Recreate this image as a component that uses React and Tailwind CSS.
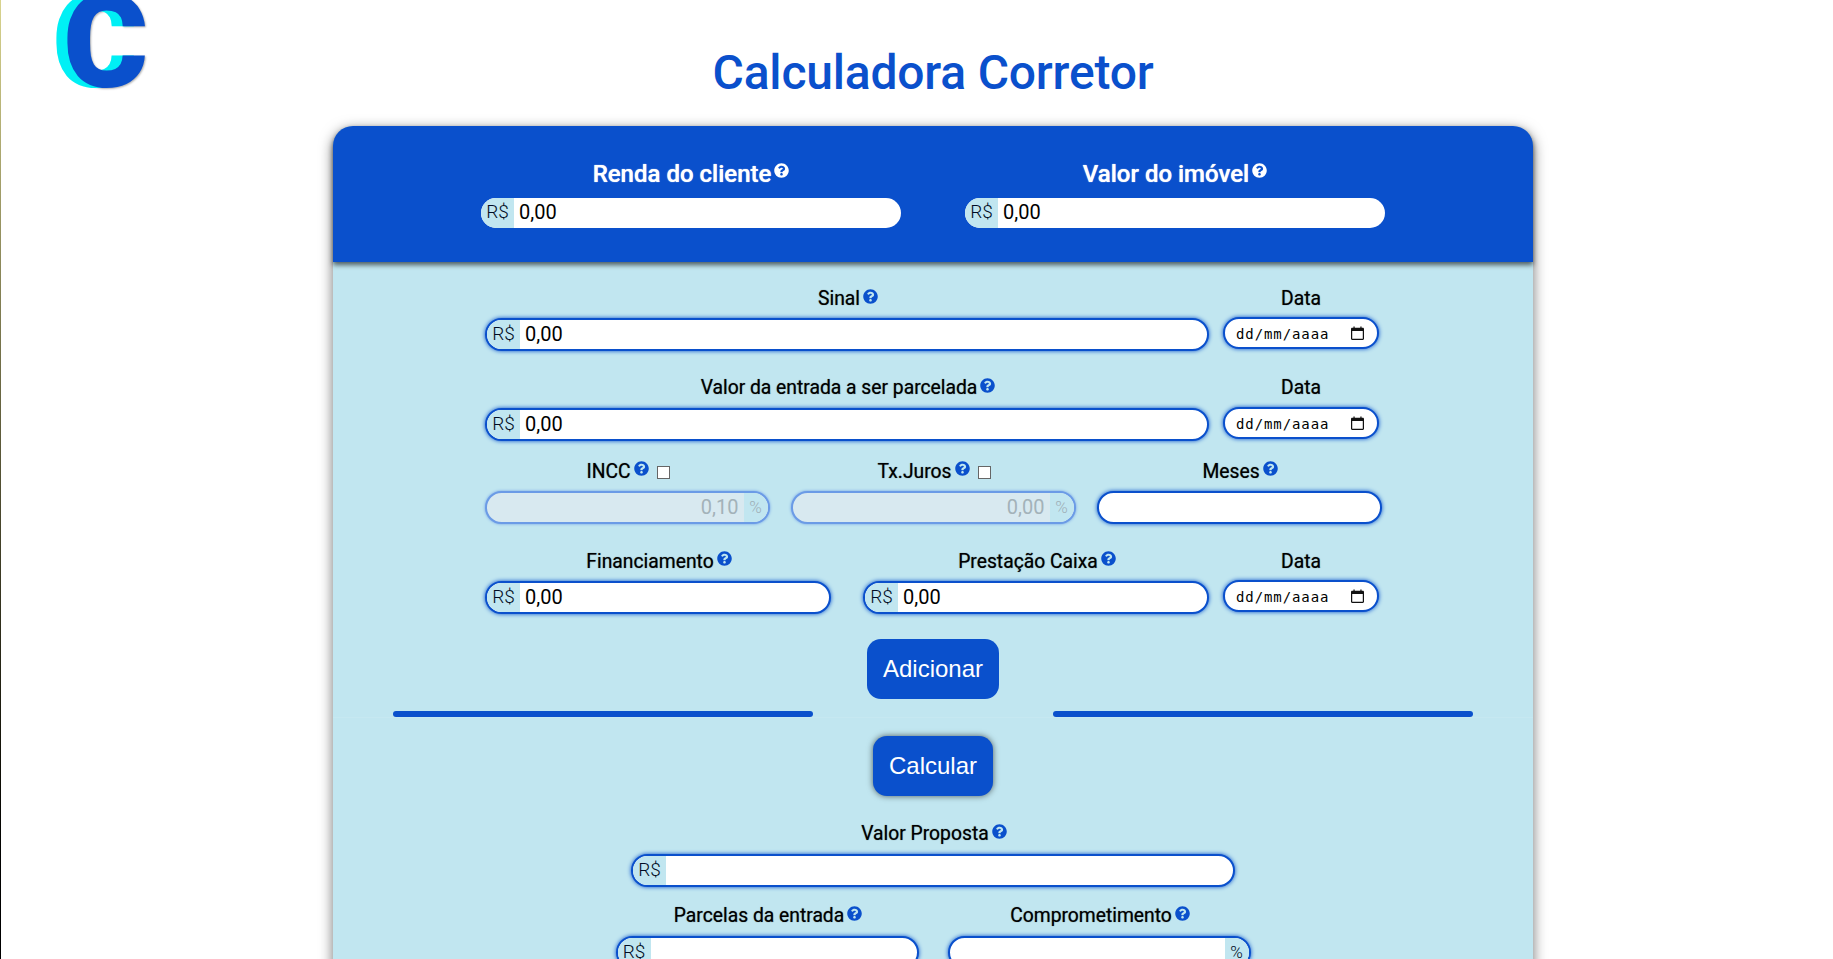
import React from 'react';
import { FaQuestionCircle } from 'react-icons/fa';

function Help({ light, high }) {
  return (
    <FaQuestionCircle className={`w-[15px] h-[15px] ml-[3px] ${high ? '-translate-y-[4px]' : '-translate-y-[3px]'} ${light ? 'text-white' : 'text-[#0a50cc]'}`} />
  );
}

function Label({ text, help, check, high }) {
  return (
    <div className={`flex items-center justify-center h-[22px] text-[19.3px] leading-[22px] text-black [text-shadow:0_0_1px_rgba(0,0,0,0.6)] ${help ? 'pl-[2px]' : ''}`}>
      <span>{text}</span>
      {help && <Help high={high} />}
      {check && <input type="checkbox" className="ml-[8px] w-[13px] h-[13px] appearance-none bg-white border border-[#666]" />}
    </div>
  );
}

function MoneyInput({ value, plain, suffix, disabled, className }) {
  const border = plain ? 'h-[30px]' : disabled
    ? 'h-[33px] border-2 border-[#6b9be6] shadow-[0_0_3px_#6b9be6]'
    : 'h-[33px] border-2 border-[#0a50cc] shadow-[0_0_4px_#0a50cc]';
  return (
    <div className={`flex items-stretch rounded-full overflow-hidden ${disabled ? 'bg-[#d8e9f0]' : 'bg-white'} ${border} ${className || ''}`}>
      {!suffix && !disabled && (
        <span className={`w-[33px] shrink-0 flex items-center justify-center bg-[#c1e6f0] text-[19px] font-light text-[#000c24] ${plain ? 'pb-[1px]' : ''}`}>R$</span>
      )}
      <input
        readOnly
        value={value || ''}
        className={`min-w-0 flex-1 bg-transparent outline-none pb-[2px] text-[20px] ${disabled ? 'pl-[4px] pr-[5px] text-right text-[#a3b2b9]' : 'px-[5px] text-black'}`}
      />
      {suffix && (
        <span className={`w-[24px] shrink-0 flex items-center justify-center bg-[#c1e6f0] text-[17px] font-light ${disabled ? 'text-[#9fb0b8]' : 'text-[#000c24]'}`}>%</span>
      )}
    </div>
  );
}

function DateInput() {
  return (
    <div className="flex items-center justify-between w-[156px] h-[32px] rounded-full bg-white border-2 border-[#0a50cc] shadow-[0_0_4px_#0a50cc] pl-[11px] pr-[13px]">
      <span className="mt-[2px] text-[14px] tracking-[0.9px] text-black font-['DejaVu_Sans_Mono',monospace]">dd/mm/aaaa</span>
      <svg width="13" height="15" viewBox="0 0 16 18" fill="#111">
        <path d="M14.5 2H13V.5h-1.5V2h-7V.5H3V2H1.5C.67 2 0 2.67 0 3.5v12c0 .83.67 1.5 1.5 1.5h13c.83 0 1.5-.67 1.5-1.5v-12C16 2.67 15.33 2 14.5 2zm0 13.5h-13V6h13v9.5z" />
      </svg>
    </div>
  );
}

function DateField({ gap }) {
  return (
    <div className="w-[156px] shrink-0">
      <Label text="Data" />
      <div className={gap}>
        <DateInput />
      </div>
    </div>
  );
}

function App() {
  return (
    <div className="flex h-screen overflow-hidden bg-white font-['Roboto',sans-serif]">
      <div className="w-px shrink-0 bg-gradient-to-b from-[#d9d48e] to-black" />
      <div className="flex-1 min-w-0 pl-[32px] flex flex-col items-center">
        <div className="w-full h-[126px] shrink-0 grid grid-cols-[1fr_auto_1fr] overflow-hidden">
          <div className="ml-[30px] -mt-[22px] text-[130px] leading-[130px] font-black text-[#0a50cc] [text-shadow:-11px_0_0_#00f0f5,1px_1px_2px_rgba(0,0,0,0.3)]">C</div>
          <h1 className="pt-[43px] text-[48px] leading-[60px] font-medium tracking-[-0.2px] text-[#0a50cc]">Calculadora Corretor</h1>
          <div />
        </div>

        <div className="w-[1200px] shrink-0 rounded-t-[20px] bg-[#c1e6f0] shadow-[0_4px_14px_rgba(0,0,0,0.55)]">
          <div className="h-[136px] rounded-t-[20px] bg-[#0a50cc] shadow-[0_3px_5px_rgba(0,0,0,0.6)] pt-[34px] flex justify-center gap-[64px]">
            {['Renda do cliente', 'Valor do imóvel'].map((text) => (
              <div key={text} className="w-[420px]">
                <div className="flex items-center justify-center h-[28px] mb-[10px] text-[24px] font-medium text-white [text-shadow:0_0_1px_#ffffff]">
                  <span>{text}</span>
                  <Help light high />
                </div>
                <MoneyInput plain value="0,00" />
              </div>
            ))}
          </div>

          <div className="h-[455px] pt-[26px] flex flex-col items-center">
            <div className="w-[896px] flex gap-[14px]">
              <div className="w-[724px]">
                <Label text="Sinal" help />
                <MoneyInput value="0,00" className="mt-[8px]" />
              </div>
              <DateField gap="mt-[7px]" />
            </div>

            <div className="w-[896px] flex gap-[14px] mt-[26px]">
              <div className="w-[724px]">
                <Label text="Valor da entrada a ser parcelada" help />
                <MoneyInput value="0,00" className="mt-[9px]" />
              </div>
              <DateField gap="mt-[8px]" />
            </div>

            <div className="w-[897px] grid grid-cols-3 gap-[21px] mt-[20px]">
              <div>
                <Label text="INCC" help check high />
                <MoneyInput disabled suffix value="0,10" className="mt-[8px]" />
              </div>
              <div>
                <Label text="Tx.Juros" help check high />
                <MoneyInput disabled suffix value="0,00" className="mt-[8px]" />
              </div>
              <div>
                <Label text="Meses" help high />
                <div className="mt-[8px] h-[33px] rounded-full bg-white border-2 border-[#0a50cc] shadow-[0_0_4px_#0a50cc]" />
              </div>
            </div>

            <div className="w-[896px] flex gap-[14px] mt-[27px]">
              <div className="w-[724px] flex gap-[32px]">
                <div className="flex-1">
                  <Label text="Financiamento" help high />
                  <MoneyInput value="0,00" className="mt-[8px]" />
                </div>
                <div className="flex-1">
                  <Label text="Prestação Caixa" help high />
                  <MoneyInput value="0,00" className="mt-[8px]" />
                </div>
              </div>
              <DateField gap="mt-[7px]" />
            </div>

            <button className="mt-[25px] w-[132px] h-[60px] rounded-[14px] bg-[#0a50cc] text-white text-[24px] font-['Liberation_Sans',Arial,sans-serif]">Adicionar</button>

            <div className="w-[1080px] flex justify-between mt-[12px]">
              <div className="w-[420px] h-[6px] rounded-full bg-[#0a50cc]" />
              <div className="w-[420px] h-[6px] rounded-full bg-[#0a50cc]" />
            </div>
          </div>

          <div className="border-t border-[#c6e8f1] pt-[18px] pb-[30px] flex flex-col items-center">
            <button className="w-[120px] h-[60px] rounded-[14px] bg-[#0a50cc] text-white text-[24px] shadow-[0_0_6px_rgba(0,0,0,0.6)] font-['Liberation_Sans',Arial,sans-serif]">Calcular</button>

            <div className="w-[604px] mt-[27px]">
              <Label text="Valor Proposta" help />
              <MoneyInput className="mt-[9px]" />
            </div>

            <div className="w-[635px] flex justify-between mt-[18px]">
              <div className="w-[303px]">
                <Label text="Parcelas da entrada" help />
                <MoneyInput className="mt-[9px]" />
              </div>
              <div className="w-[303px]">
                <Label text="Comprometimento" help />
                <MoneyInput suffix className="mt-[9px]" />
              </div>
            </div>
          </div>
        </div>
      </div>
    </div>
  );
}

export default App;
